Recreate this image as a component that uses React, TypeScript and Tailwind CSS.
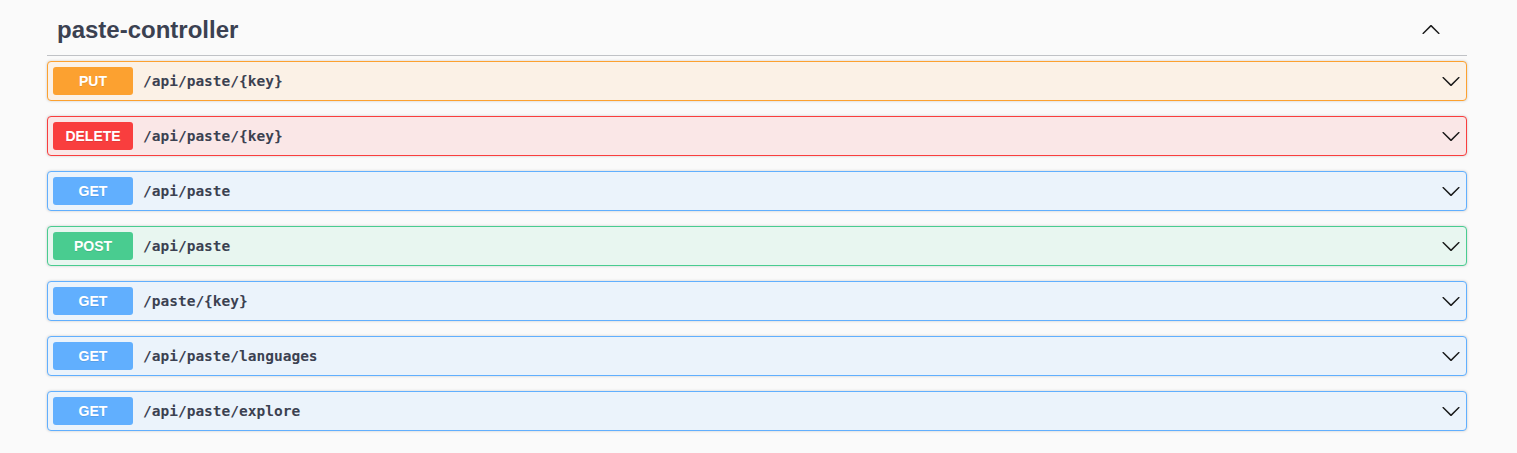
import React from 'react';

type Method = 'PUT' | 'DELETE' | 'GET' | 'POST';

interface Endpoint {
  method: Method;
  path: string;
}

const endpoints: Endpoint[] = [
  { method: 'PUT', path: '/api/paste/{key}' },
  { method: 'DELETE', path: '/api/paste/{key}' },
  { method: 'GET', path: '/api/paste' },
  { method: 'POST', path: '/api/paste' },
  { method: 'GET', path: '/paste/{key}' },
  { method: 'GET', path: '/api/paste/languages' },
  { method: 'GET', path: '/api/paste/explore' },
];

const methodStyles: Record<Method, { row: string; badge: string }> = {
  PUT: { row: 'bg-[#fbf1e6] border-[#fca130]', badge: 'bg-[#fca130]' },
  DELETE: { row: 'bg-[#fae7e7] border-[#f93e3e]', badge: 'bg-[#f93e3e]' },
  GET: { row: 'bg-[#ebf3fb] border-[#61affe]', badge: 'bg-[#61affe]' },
  POST: { row: 'bg-[#e8f6f0] border-[#49cc90]', badge: 'bg-[#49cc90]' },
};

function Arrow({ up = false }: { up?: boolean }) {
  return (
    <svg
      width="20"
      height="20"
      viewBox="0 0 20 20"
      className={up ? 'rotate-180 shrink-0' : 'shrink-0'}
      aria-hidden="true"
    >
      <path
        fill="#1a1a1a"
        d="M17.418 6.109c.272-.268.709-.268.979 0s.271.701 0 .969l-7.908 7.83c-.27.268-.707.268-.979 0l-7.908-7.83c-.27-.268-.27-.701 0-.969.271-.268.709-.268.979 0L10 13.25l7.418-7.141z"
      />
    </svg>
  );
}

function OperationRow({ method, path }: Endpoint) {
  const s = methodStyles[method];
  return (
    <div
      className={`mb-[15px] flex items-center rounded-[4px] border p-[5px] shadow-[0_0_3px_rgba(0,0,0,0.19)] ${s.row}`}
    >
      <span
        className={`flex h-[28px] w-[80px] items-center justify-center rounded-[3px] text-[14px] font-bold text-white [text-shadow:0_1px_0_rgba(0,0,0,0.1)] ${s.badge}`}
        style={{ fontFamily: '"Liberation Sans", Arial, sans-serif' }}
      >
        {method}
      </span>
      <span
        className="flex-1 px-[10px] pt-[1px] text-[14.5px] font-bold text-[#3b4151]"
        style={{ fontFamily: '"DejaVu Sans Mono", monospace' }}
      >
        {path}
      </span>
      <Arrow />
    </div>
  );
}

export default function App() {
  return (
    <div className="min-h-[453px] bg-[#fafafa] pl-[47px] pr-[50px] pb-[20px]">
      <div
        className="mb-[5px] flex h-[56px] items-center border-b border-[rgba(59,65,81,0.3)] pl-[10px] pr-[26px] pt-[4px]"
        style={{ fontFamily: '"Liberation Sans", Arial, sans-serif' }}
      >
        <span className="flex-1 text-[24px] font-bold text-[#3b4151]">paste-controller</span>
        <Arrow up />
      </div>
      {endpoints.map((e, i) => (
        <OperationRow key={i} method={e.method} path={e.path} />
      ))}
    </div>
  );
}
